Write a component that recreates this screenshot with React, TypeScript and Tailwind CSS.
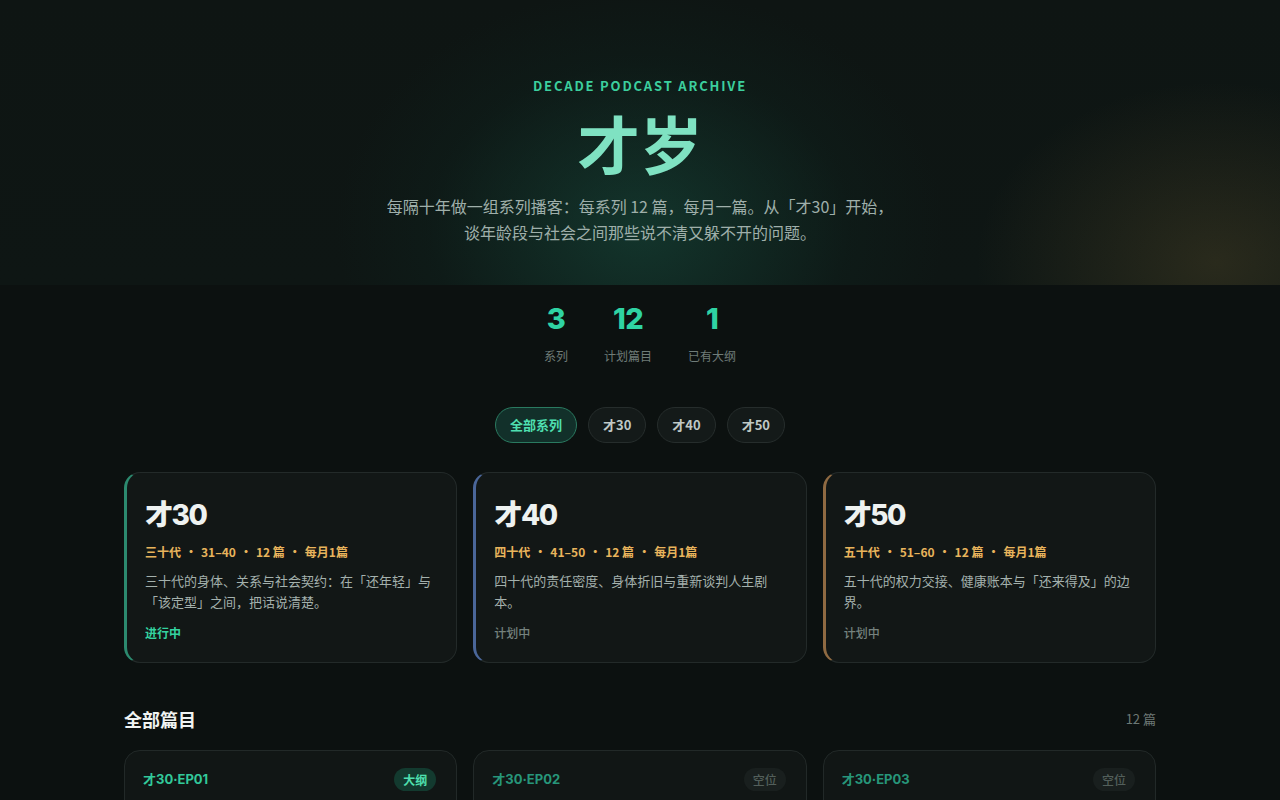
import React from "react";

const series = [
  {
    name: "才30",
    meta: ["三十代", "31–40", "12 篇", "每月1篇"],
    desc: "三十代的身体、关系与社会契约：在「还年轻」与「该定型」之间，把话说清楚。",
    status: "进行中",
    active: true,
    border: "border-l-[#2c8a6f]",
  },
  {
    name: "才40",
    meta: ["四十代", "41–50", "12 篇", "每月1篇"],
    desc: "四十代的责任密度、身体折旧与重新谈判人生剧本。",
    status: "计划中",
    active: false,
    border: "border-l-[#4a6699]",
  },
  {
    name: "才50",
    meta: ["五十代", "51–60", "12 篇", "每月1篇"],
    desc: "五十代的权力交接、健康账本与「还来得及」的边界。",
    status: "计划中",
    active: false,
    border: "border-l-[#8f6a42]",
  },
];

const episodes = Array.from({ length: 12 }, (_, i) => ({
  id: `才30·EP${String(i + 1).padStart(2, "0")}`,
  outline: i === 0,
  month: i + 1,
}));

export default function App() {
  return (
    <div className="min-h-screen bg-[#0c1110] text-[#e6ecea] font-[family-name:'Noto_Sans_CJK_SC','Noto_Sans',sans-serif]">
      {/* Hero */}
      <header className="h-[285px] pt-[76px] text-center bg-[radial-gradient(ellipse_380px_300px_at_50%_80%,rgba(24,84,68,0.5),rgba(14,40,34,0.25)_55%,transparent_80%),radial-gradient(ellipse_320px_240px_at_95%_92%,rgba(120,100,52,0.26),transparent_75%),linear-gradient(180deg,#0e1513,#0e1614)]">
        <div className="text-[13px] leading-5 font-bold tracking-[0.14em] text-[#3ccf9e]">
          DECADE PODCAST ARCHIVE
        </div>
        <h1 className="mt-[11px] text-[63px] leading-[70px] font-bold text-[#7fe2c2]">才岁</h1>
        <p className="mt-[16px] text-[16px] leading-[26px] text-[#9fafaa]">
          每隔十年做一组系列播客：每系列 12 篇，每月一篇。从「才30」开始，
          <br />
          谈年龄段与社会之间那些说不清又躲不开的问题。
        </p>
      </header>

      {/* Stats */}
      <section className="pt-[14px] flex justify-center gap-9">
        {[
          ["3", "系列"],
          ["12", "计划篇目"],
          ["1", "已有大纲"],
        ].map(([n, l]) => (
          <div key={l} className="flex flex-col items-center">
            <div className="text-[29px] leading-10 font-extrabold tracking-tight text-[#2fd3a3] font-[family-name:Inter,sans-serif]">
              {n}
            </div>
            <div className="mt-2 text-[12px] leading-[18px] text-[#6f7c78]">{l}</div>
          </div>
        ))}
      </section>

      {/* Filters */}
      <nav className="mt-[42px] flex justify-center gap-[11px]">
        <button className="h-9 px-[14px] rounded-full border border-[#2a7a60] bg-[#12302a] text-[13px] font-bold text-[#4fe0b1]">
          全部系列
        </button>
        {["才30", "才40", "才50"].map((t) => (
          <button
            key={t}
            className="h-9 px-[14px] rounded-full border border-[#262d2c] bg-[#141a19] text-[13px] font-bold text-[#bfc8c5]"
          >
            {t}
          </button>
        ))}
      </nav>

      <main className="mx-auto w-[1032px]">
        {/* Series cards */}
        <div className="mt-[29px] grid grid-cols-3 gap-4">
          {series.map((s) => (
            <div
              key={s.name}
              className={`h-[191px] rounded-2xl border border-[#232a29] border-l-[3px] ${s.border} bg-[#121716] pl-[18px] pr-5 pt-[24px]`}
            >
              <div className="text-[28px] leading-9 font-extrabold tracking-[-0.05em] text-[#eef2f1] font-[family-name:Inter,'Noto_Sans_CJK_SC',sans-serif]">
                {s.name}
              </div>
              <div className="mt-[10px] flex items-center text-[12px] leading-[18px] font-bold text-[#e8b45c]">
                {s.meta.map((m, i) => (
                  <React.Fragment key={m}>
                    {i > 0 && <span className="mx-[4px]">·</span>}
                    <span>{m}</span>
                  </React.Fragment>
                ))}
              </div>
              <p className="mt-[9px] text-[13px] leading-[21px] text-[#a4b1ad]">{s.desc}</p>
              <div
                className={`mt-[12px] text-[12px] leading-[18px] ${
                  s.active ? "font-bold text-[#34d3a0]" : "font-medium text-[#75827e]"
                }`}
              >
                {s.status}
              </div>
            </div>
          ))}
        </div>

        {/* Episodes */}
        <div className="mt-[43px] flex items-center justify-between">
          <h2 className="text-[18px] leading-[26px] font-bold text-[#f0f3f2]">全部篇目</h2>
          <span className="text-[13px] text-[#6c7875]">12 篇</span>
        </div>
        <div className="mt-[18px] grid grid-cols-3 gap-4 pb-10">
          {episodes.map((e) => (
            <div
              key={e.id}
              className="h-[150px] rounded-2xl border border-[#222928] bg-[#111615] pl-[18px] pr-5 pt-[17px]"
            >
              <div className="flex items-center justify-between">
                <span
                  className={`text-[13px] font-bold font-[family-name:Inter,'Noto_Sans_CJK_SC',sans-serif] ${
                    e.outline ? "text-[#32c99a]" : "text-[#27967a]"
                  }`}
                >
                  {e.id}
                </span>
                <span
                  className={`h-[23px] px-[9px] rounded-full text-[12px] leading-[23px] ${
                    e.outline ? "bg-[#133a2f] text-[#4fe0b0] font-bold" : "bg-[#191f1e] text-[#535f5b] font-medium"
                  }`}
                >
                  {e.outline ? "大纲" : "空位"}
                </span>
              </div>
              <div className="mt-3 text-[15px] font-bold text-[#dfe6e4]">
                {e.outline ? "三十岁，被催着长大" : "待定"}
              </div>
              <div className="mt-2 text-[12px] text-[#6f7c78]">第 {e.month} 月</div>
            </div>
          ))}
        </div>
      </main>
    </div>
  );
}
